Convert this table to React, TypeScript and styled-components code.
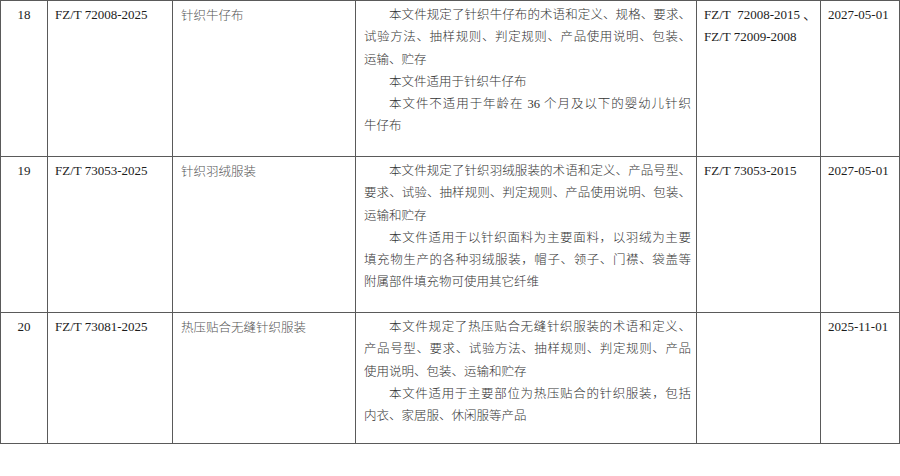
import styled, { createGlobalStyle } from 'styled-components'

// ─── Layout constants ────────────────────────────────────────────────────────
const COL_WIDTHS = [47, 125, 183, 341, 124, 79]
const LINE_HEIGHT = 22.3
const BORDER = '#5a5a5a'

// ─── Data ────────────────────────────────────────────────────────────────────
type Row = {
  no: string
  code: string
  name: string
  scope: string[][]
  replaces: string[]
  date: string
  height: number
}

const ROWS: Row[] = [
  {
    no: '18',
    code: 'FZ/T 72008-2025',
    name: '针织牛仔布',
    scope: [
      [
        '本文件规定了针织牛仔布的术语和定义、规格、要求、',
        '试验方法、抽样规则、判定规则、产品使用说明、包装、',
        '运输、贮存',
      ],
      ['本文件适用于针织牛仔布'],
      ['本文件不适用于年龄在 36 个月及以下的婴幼儿针织', '牛仔布'],
    ],
    replaces: ['FZ/T\u00a0\u00a072008-2015 、', 'FZ/T 72009-2008'],
    date: '2027-05-01',
    height: 156,
  },
  {
    no: '19',
    code: 'FZ/T 73053-2025',
    name: '针织羽绒服装',
    scope: [
      [
        '本文件规定了针织羽绒服装的术语和定义、产品号型、',
        '要求、试验、抽样规则、判定规则、产品使用说明、包装、',
        '运输和贮存',
      ],
      [
        '本文件适用于以针织面料为主要面料，以羽绒为主要',
        '填充物生产的各种羽绒服装，帽子、领子、门襟、袋盖等',
        '附属部件填充物可使用其它纤维',
      ],
    ],
    replaces: ['FZ/T 73053-2015'],
    date: '2027-05-01',
    height: 156,
  },
  {
    no: '20',
    code: 'FZ/T 73081-2025',
    name: '热压贴合无缝针织服装',
    scope: [
      [
        '本文件规定了热压贴合无缝针织服装的术语和定义、',
        '产品号型、要求、试验方法、抽样规则、判定规则、产品',
        '使用说明、包装、运输和贮存',
      ],
      ['本文件适用于主要部位为热压贴合的针织服装，包括', '内衣、家居服、休闲服等产品'],
    ],
    replaces: [],
    date: '2025-11-01',
    height: 131,
  },
]

// ─── Component ───────────────────────────────────────────────────────────────
const App = () => (
  <>
    <GlobalStyle />
    <Page>
      <StandardsTable>
        <colgroup>
          {COL_WIDTHS.map((w, i) => (
            <col key={i} style={{ width: w }} />
          ))}
        </colgroup>
        <tbody>
          {ROWS.map((row) => (
            <TableRow key={row.no} $height={row.height}>
              <NumberCell>{row.no}</NumberCell>
              <LatinCell>{row.code}</LatinCell>
              <NameCell>{row.name}</NameCell>
              <ScopeCell>
                {row.scope.map((para, p) =>
                  para.map((line, l) => (
                    <ScopeLine
                      key={`${p}-${l}`}
                      $indent={l === 0}
                      $justify={l < para.length - 1}
                    >
                      {line}
                    </ScopeLine>
                  ))
                )}
              </ScopeCell>
              <LatinCell>
                {row.replaces.map((r) => (
                  <LatinLine key={r}>{r}</LatinLine>
                ))}
              </LatinCell>
              <LatinCell>{row.date}</LatinCell>
            </TableRow>
          ))}
        </tbody>
      </StandardsTable>
    </Page>
  </>
)

// ─── Styles ──────────────────────────────────────────────────────────────────
const GlobalStyle = createGlobalStyle`
  html, body {
    margin: 0;
    padding: 0;
    background: #ffffff;
  }
`

const Page = styled.div`
  width: 900px;
  height: 476px;
  overflow: hidden;
  background: #ffffff;
`

const StandardsTable = styled.table`
  table-layout: fixed;
  width: 899px;
  border-collapse: collapse;
  font-family: 'Liberation Serif', 'Noto Sans CJK SC', serif;
  font-size: 13px;
  color: #1c1c1c;
`

const TableRow = styled.tr<{ $height: number }>`
  height: ${({ $height }) => $height}px;
`

const Cell = styled.td`
  border: 1px solid ${BORDER};
  vertical-align: top;
  padding: 3px 6px 0 7px;
  line-height: ${LINE_HEIGHT}px;
`

const NumberCell = styled(Cell)`
  text-align: center;
  padding-left: 2px;
  padding-right: 2px;
`

const LatinCell = styled(Cell)`
  white-space: nowrap;
`

const LatinLine = styled.div`
  line-height: ${LINE_HEIGHT}px;
`

const NameCell = styled(Cell)`
  padding-left: 8px;
  font-family: 'Noto Sans CJK SC', sans-serif;
  font-weight: 300;
  font-size: 12.5px;
  color: #555555;
`

const ScopeCell = styled(Cell)`
  padding: 3px 5px 0 8px;
  font-size: 12.5px;
  font-weight: 300;
  color: #333333;
`

const ScopeLine = styled.div<{ $indent: boolean; $justify: boolean }>`
  white-space: nowrap;
  line-height: ${LINE_HEIGHT}px;
  text-indent: ${({ $indent }) => ($indent ? '2em' : '0')};
  text-align: ${({ $justify }) => ($justify ? 'justify' : 'left')};
  text-align-last: ${({ $justify }) => ($justify ? 'justify' : 'left')};
  ${({ $justify }) => $justify && 'white-space: normal;'}
`

export default App
